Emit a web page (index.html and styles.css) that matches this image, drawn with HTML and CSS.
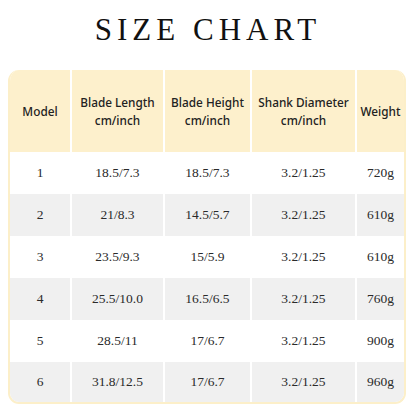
FILE: index.html
```html
<!DOCTYPE html>
<html>
<head>
<meta charset="utf-8">
<link rel="stylesheet" href="styles.css">
</head>
<body>
<h1 class="title">SIZE CHART</h1>
<div class="card">
<table class="chart">
<colgroup>
<col class="c1"><col class="c2"><col class="c3"><col class="c4"><col class="c5">
</colgroup>
<thead>
<tr><th>Model</th><th>Blade Length<br>cm/inch</th><th>Blade Height<br>cm/inch</th><th>Shank Diameter<br>cm/inch</th><th>Weight</th></tr>
</thead>
<tbody>
<tr><td>1</td><td>18.5/7.3</td><td>18.5/7.3</td><td>3.2/1.25</td><td>720g</td></tr>
<tr><td>2</td><td>21/8.3</td><td>14.5/5.7</td><td>3.2/1.25</td><td>610g</td></tr>
<tr><td>3</td><td>23.5/9.3</td><td>15/5.9</td><td>3.2/1.25</td><td>610g</td></tr>
<tr><td>4</td><td>25.5/10.0</td><td>16.5/6.5</td><td>3.2/1.25</td><td>760g</td></tr>
<tr><td>5</td><td>28.5/11</td><td>17/6.7</td><td>3.2/1.25</td><td>900g</td></tr>
<tr><td>6</td><td>31.8/12.5</td><td>17/6.7</td><td>3.2/1.25</td><td>960g</td></tr>
</tbody>
</table>
</div>
</body>
</html>
```
FILE: styles.css
```css
html, body {
  margin: 0;
  padding: 0;
  background: #fff;
}
body {
  width: 416px;
  height: 416px;
  overflow: hidden;
}
.title {
  margin: 0;
  padding-top: 14px;
  height: 70px;
  box-sizing: border-box;
  text-align: center;
  font-family: "Liberation Serif", serif;
  font-weight: normal;
  font-size: 31px;
  letter-spacing: 5px;
  line-height: 32px;
  color: #111;
}
.card {
  margin: 0 10px 0 8px;
  border: 2px solid #fcefc9;
  border-top: none;
  border-radius: 11px;
  overflow: hidden;
}
.chart {
  width: 100%;
  border-collapse: separate;
  border-spacing: 0;
  table-layout: fixed;
}
.c1 { width: 62px; }
.c2 { width: 93px; }
.c3 { width: 87px; }
.c4 { width: 105px; }
.c5 { width: auto; }
.chart th {
  background: #fdf0cc;
  height: 82px;
  padding: 0;
  font-family: "Noto Sans", "Open Sans", sans-serif;
  font-weight: 500;
  font-size: 11.8px;
  line-height: 18px;
  color: #222;
  text-align: center;
  border-right: 2px solid #fff;
  box-sizing: border-box;
}
.chart td {
  height: 42px;
  padding: 0;
  font-family: "Liberation Serif", serif;
  font-variant-numeric: oldstyle-nums;
  font-size: 13.5px;
  color: #2a2a2a;
  text-align: center;
  border-right: 2px solid #fff;
}
.chart th:last-child, .chart td:last-child {
  border-right: none;
}
.chart tbody tr:nth-child(even) td {
  background: #f0f0f0;
}
.chart tbody tr:last-child td {
  height: 40px;
}
```
